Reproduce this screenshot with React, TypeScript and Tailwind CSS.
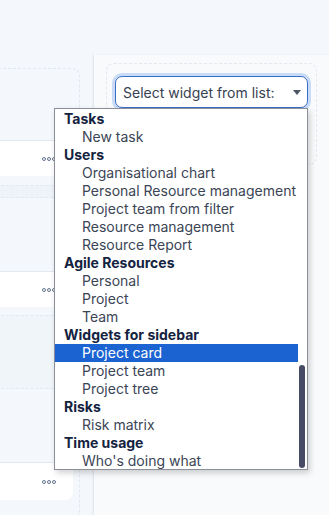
import React from 'react'

type Row = { label: string; group?: boolean; selected?: boolean }

const rows: Row[] = [
    { label: 'Tasks', group: true },
    { label: 'New task' },
    { label: 'Users', group: true },
    { label: 'Organisational chart' },
    { label: 'Personal Resource management' },
    { label: 'Project team from filter' },
    { label: 'Resource management' },
    { label: 'Resource Report' },
    { label: 'Agile Resources', group: true },
    { label: 'Personal' },
    { label: 'Project' },
    { label: 'Team' },
    { label: 'Widgets for sidebar', group: true },
    { label: 'Project card', selected: true },
    { label: 'Project team' },
    { label: 'Project tree' },
    { label: 'Risks', group: true },
    { label: 'Risk matrix' },
    { label: 'Time usage', group: true },
    { label: "Who's doing what" },
]

const Dots = () => (
    <span className="flex gap-[1px]">
        <span className="w-[4px] h-[4px] rounded-full border border-slate-500"></span>
        <span className="w-[4px] h-[4px] rounded-full border border-slate-500"></span>
        <span className="w-[4px] h-[4px] rounded-full border border-slate-500"></span>
    </span>
)

const Footer = ({ h = 'h-[36px]', rounded = false }: { h?: string; rounded?: boolean }) => (
    <div className={`${h} bg-white border-t border-slate-200 flex items-center justify-end pr-[17px] ${rounded ? 'rounded-br-lg' : ''}`}>
        <Dots />
    </div>
)

export default function App() {
    return (
        <div className="w-[329px] h-[515px] overflow-hidden bg-[#f4f7fb] relative" style={{ fontFamily: 'Inter, "Noto Sans", sans-serif' }}>
            <div className="flex pt-[55px] h-full">
                {/* Left column of widgets */}
                <div className="w-[93px] shrink-0 pt-[13px] pr-[13px]">
                    <div className="-ml-[10px] h-[600px] border border-dashed border-slate-200 rounded-lg flex flex-col">
                        <div className="w-[82px] flex flex-col">
                            <div className="h-[71px]"></div>
                            <Footer />
                            <div className="h-[9px] bg-[#f4f7fb]"></div>
                            <div className="h-[13px] bg-[#eef3f9] border-y border-dashed border-slate-200"></div>
                            <div className="h-[73px]"></div>
                            <Footer />
                            <div className="h-[8px]"></div>
                            <div className="h-[74px] bg-[#f0f5fa] border-y border-dashed border-slate-200"></div>
                            <div className="h-[73px]"></div>
                            <Footer h="h-[38px]" rounded />
                        </div>
                    </div>
                </div>

                {/* Right sidebar panel */}
                <div className="flex-1 bg-[#f8fafc] border-l border-slate-200 shadow-[-1px_0_2px_rgba(0,0,0,0.03)] pt-[8px] pl-[12px]">
                    <div className="w-[211px] h-[102px] border border-dashed border-slate-200 rounded-lg pt-[12px] pl-[8px]">
                        <div className="w-[193px] h-[32px] rounded-[7px] border border-[#3a6fc9] ring-[3px] ring-[#c9dbf5] bg-white flex items-center justify-between pl-[7px] pr-[6px] text-[14px] text-[#374151]">
                            <span>Select widget from list:</span>
                            <span className="w-0 h-0 border-l-[4px] border-r-[4px] border-t-[5px] border-l-transparent border-r-transparent border-t-[#4b5563]"></span>
                        </div>
                    </div>
                </div>
            </div>

            {/* Opened list */}
            <div className="absolute left-[54px] top-[108px] w-[254px] h-[362px] bg-white border border-[#8a8f99] shadow-[2px_3px_6px_rgba(0,0,0,0.18)] flex">
                <div className="flex-1 flex flex-col pt-[1px]">
                    {rows.map((r) => (
                        <div
                            key={r.label}
                            className={`h-[18px] leading-[18px] text-[14px] whitespace-nowrap ${
                                r.group
                                    ? 'pl-[9px] font-bold text-[#14233f]'
                                    : r.selected
                                    ? 'pl-[27px] bg-[#1b63d1] text-white'
                                    : 'pl-[27px] text-[#3b4556]'
                            }`}
                        >
                            {r.label}
                        </div>
                    ))}
                </div>
                <div className="w-[9px] shrink-0 relative">
                    <div className="absolute left-[1px] top-[256px] w-[6px] h-[103px] rounded-full bg-[#474b66]"></div>
                </div>
            </div>
        </div>
    )
}
